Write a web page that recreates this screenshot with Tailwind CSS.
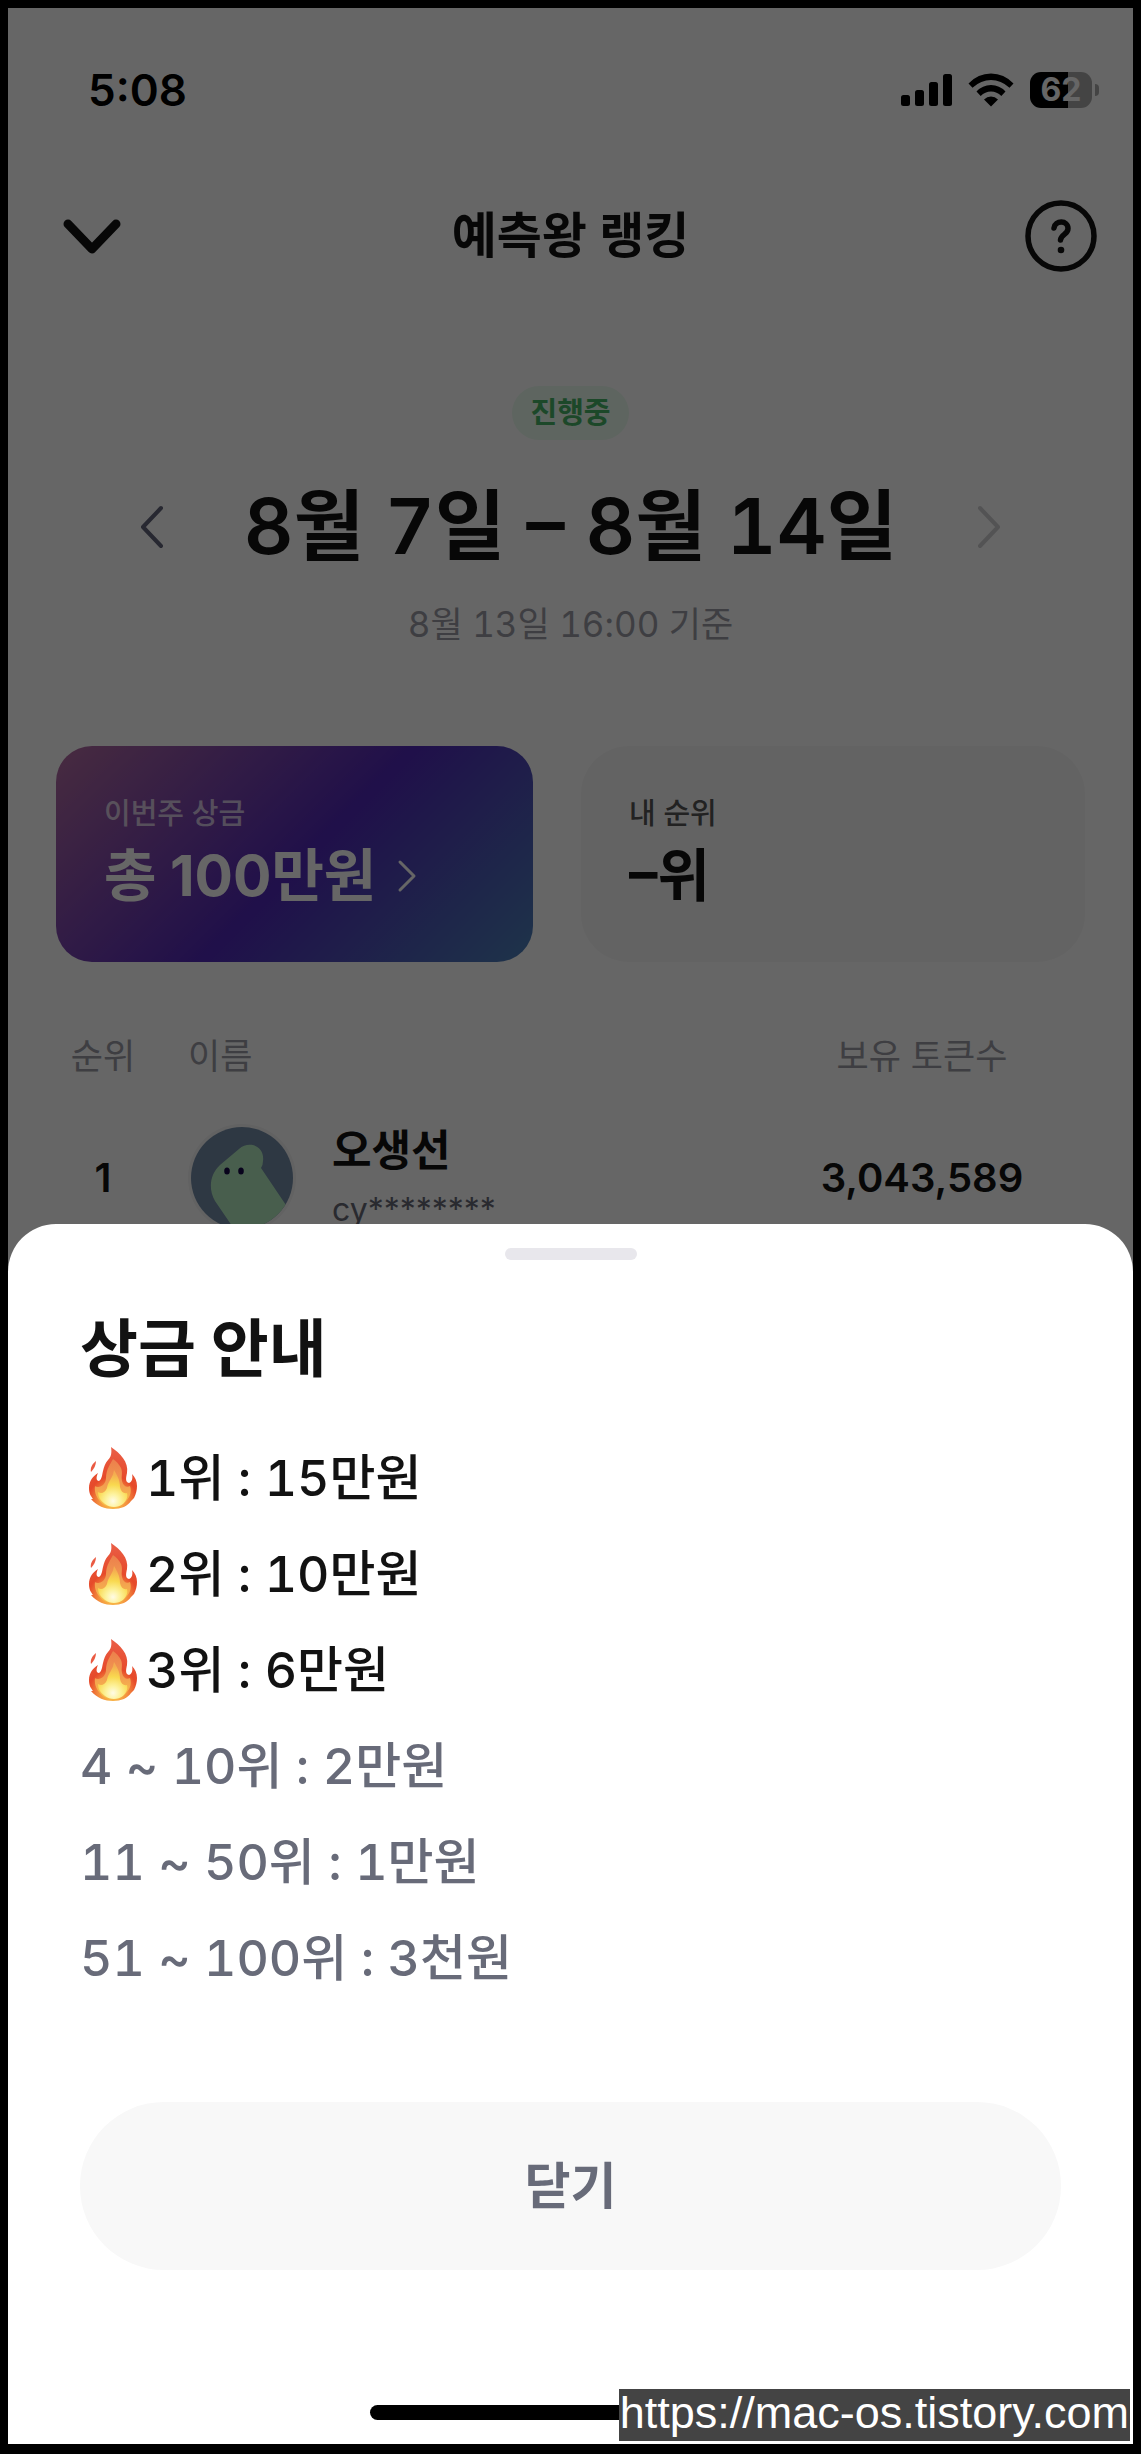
<!DOCTYPE html>
<html lang="ko">
<head>
<meta charset="utf-8">
<meta name="viewport" content="width=device-width, initial-scale=1">
<title>예측왕 랭킹</title>
<script src="https://cdn.jsdelivr.net/npm/@tailwindcss/browser@4"></script>
</head>
<body class="bg-black font-[family-name:Inter,'Noto_Sans_CJK_KR',sans-serif] text-[#121212]">
<!-- Shared flame symbol -->
<svg class="absolute size-0" aria-hidden="true">
  <defs>
    <radialGradient id="flame-outer" gradientUnits="userSpaceOnUse" cx="25" cy="54" r="54">
      <stop offset="0" stop-color="#fbd34c"/><stop offset=".25" stop-color="#f4933f"/><stop offset=".46" stop-color="#e64a2a"/><stop offset="1" stop-color="#ea5f48"/>
    </radialGradient>
    <linearGradient id="flame-mid" x1="0" y1="0" x2="0" y2="1">
      <stop offset="0" stop-color="#ec7f4c"/><stop offset=".5" stop-color="#f29a50"/><stop offset="1" stop-color="#f8c44a"/>
    </linearGradient>
    <radialGradient id="flame-core" gradientUnits="userSpaceOnUse" cx="25" cy="54" r="27">
      <stop offset="0" stop-color="#fffbe6"/><stop offset=".25" stop-color="#fdf3a0"/><stop offset=".6" stop-color="#f9d94f"/><stop offset="1" stop-color="#f4ac50"/>
    </radialGradient>
    <symbol id="flame" viewBox="0 0 50 62">
      <path fill="#ea5a42" d="M8 14C4 17 2 21 3 25C6 22 8 18 8 14Z"/>
      <path fill="url(#flame-outer)" d="M23 0C24 6 23 10 20 13C17 16 16 20 15 24C14 28 14 32 11 34C8 34 8 30 10 26C5 29 1 34 1 41C1 47 3 49 5 52H3C9 59 17 62 25 62C33 62 40 59 43 54L46 51C48 47 49 43 49 39C49 34 47 30 44 27C45 31 44 35 41 36C37 35 38 31 39 26C41 15 32 6 23 0Z"/>
      <path fill="url(#flame-mid)" d="M25 12C23 16 18 22 18 31C18 36 14 40 10 40C8 40 7 39 7 39C6 46 9 52 15 57C21 61 31 60 36 56C42 51 44 45 42 39C39 41 35 39 34 34C33 29 35 26 33 21C31 17 28 14 25 12Z"/>
      <path fill="url(#flame-core)" d="M26 23C25 31 20 34 19 41C17 46 13 47 10 45C10 50 12 53 17 57C22 61 30 61 35 57C39 53 40 49 39 46C36 47 33 45 32 40C32 33 29 28 26 23Z"/>
    </symbol>
  </defs>
</svg>

<div class="grid min-h-screen px-2 pt-2 pb-[10px]">
  <!-- Ranking page -->
  <main class="col-start-1 row-start-1 bg-white">
    <div class="flex h-[164px] items-center justify-between pr-[34px] pl-20 text-black">
      <time class="text-[44px] font-semibold">5:08</time>
      <div class="flex items-center gap-4">
        <svg class="h-8 w-[51px]" viewBox="0 0 51 32" aria-label="신호 세기"><rect y="21" width="9" height="11" rx="2.5"/><rect x="14" y="16" width="9" height="16" rx="2.5"/><rect x="28" y="8" width="9" height="24" rx="2.5"/><rect x="42" width="9" height="32" rx="2.5"/></svg>
        <svg class="h-[34px] w-[46px]" viewBox="0 0 46 34" aria-label="와이파이"><path d="M.5 10.500Q10 .5 23 .5T45.500 10.500L41.500 14.700Q33 7 23 7T4.500 14.700Z"/><path d="M8.500 18.500Q14.500 12 23 12T37.500 18.500L33.300 23Q29 18.500 23 18.500T12.700 23Z"/><path d="M16 26.500Q19 23.500 23 23.500T30 26.500L23 33.500Z"/></svg>
        <div class="flex items-center gap-[3px]">
          <div class="flex h-9 w-[62px] items-center justify-center rounded-[11px] bg-linear-to-r from-black from-61% to-[#aaa] to-61% text-[32px] leading-none font-bold text-white">62</div>
          <div class="h-3 w-1 rounded-r-full bg-[#aaa]"></div>
        </div>
      </div>
    </div>

    <header class="grid h-32 grid-cols-[1fr_auto_1fr] items-center px-9">
      <button type="button" class="ml-4 w-[62px]" aria-label="뒤로"><svg class="h-9 w-[62px]" viewBox="0 0 62 36" fill="none" stroke="currentColor" stroke-width="9" stroke-linecap="round" stroke-linejoin="round"><path d="M8 6L32 31L56 6"/></svg></button>
      <h1 class="text-[49px] leading-[72px] font-semibold">예측왕 랭킹</h1>
      <button type="button" class="justify-self-end" aria-label="도움말"><svg class="size-[72px]" viewBox="0 0 72 72" fill="none" stroke="currentColor" stroke-linecap="round"><circle cx="36" cy="36" r="33" stroke-width="5.500"/><path stroke-width="5.500" d="M29 28C30 20 43 20 43 28.500C43 34.500 36 34 35.500 40"/><circle cx="36" cy="50" r="3.300" fill="currentColor" stroke="none"/></svg></button>
    </header>

    <section class="flex flex-col items-center pt-[86px] tabular-nums">
      <span class="flex h-[54px] items-center rounded-full bg-[#ebfcf0] px-[18px] text-[29px] font-semibold text-[#46b466]">진행중</span>
      <div class="mt-[38px] flex w-full items-center justify-between px-[128px]">
        <button type="button" aria-label="이전 주"><svg class="h-12 w-8" viewBox="0 0 32 48" fill="none" stroke="#62647a" stroke-width="4" stroke-linecap="round" stroke-linejoin="round"><path d="M25 6L7 25L25 44"/></svg></button>
        <h2 class="text-[77px] leading-[96px] font-semibold [font-feature-settings:'case']">8월 7일 – 8월 14일</h2>
        <button type="button" aria-label="다음 주"><svg class="h-12 w-8" viewBox="0 0 32 48" fill="none" stroke="#d0d0d2" stroke-width="4" stroke-linecap="round" stroke-linejoin="round"><path d="M7 6L25 25L7 44"/></svg></button>
      </div>
      <p class="mt-[26px] text-[35px] leading-[48px] text-[#9b9ca5]">8월 13일 16:00 기준</p>
    </section>

    <section class="mt-[98px] grid grid-cols-[477fr_504fr] gap-12 px-12">
      <a href="#prize" class="h-[216px] rounded-[36px] bg-linear-[135deg] from-[#b46ca0] via-[#5028b8] via-52% to-[#4b82b9] px-12 pt-12 text-white">
        <p class="text-[29px] leading-10 font-medium text-white/70">이번주 상금</p>
        <p class="mt-[10px] flex items-center gap-5 text-[57px] leading-[64px] font-bold">총 100만원
          <svg class="h-9 w-6" viewBox="0 0 24 36" fill="none" stroke="currentColor" stroke-width="3" stroke-linecap="round" stroke-linejoin="round"><path d="M4 4L18 18L4 32"/></svg></p>
      </a>
      <div class="h-[216px] rounded-[48px] bg-[#f8f8f8] px-12 pt-12">
        <p class="text-[29px] leading-10 font-medium text-[#555]">내 순위</p>
        <p class="mt-[10px] text-[57px] leading-[64px] font-bold [font-feature-settings:'case']">–위</p>
      </div>
    </section>

    <div class="mt-[46px] px-12">
      <table class="w-full table-fixed">
        <thead class="text-[35px] text-[#9b9ca5]">
          <tr class="h-24"><th class="w-[94px] p-0 font-normal">순위</th><th class="p-0 pl-[38px] text-left font-normal">이름</th><th class="w-[326px] p-0 font-normal">보유 토큰수</th></tr>
        </thead>
        <tbody>
          <tr class="h-[148px] text-[40px] font-semibold">
            <td class="p-0 text-center">1</td>
            <td class="p-0 pl-[38px]">
              <div class="flex items-center gap-9">
                <svg class="size-[108px] shrink-0" viewBox="0 0 108 108" role="img" aria-label="프로필">
                  <defs><clipPath id="avatar"><circle cx="54" cy="54" r="51"/></clipPath></defs>
                  <circle cx="54" cy="54" r="54" fill="#f4f4f6"/>
                  <g clip-path="url(#avatar)"><path fill="#738ca7" d="M0 0H108V108H0Z"/>
                  <path fill="#b5ecc0" d="M51 25C61 16 77 22 75 37Q75 41 73 44L114 105L70 140L27 77C20 65 22 50 32 41Z"/></g>
                  <ellipse cx="39" cy="47" rx="2.800" ry="3.500" fill="#160846"/><ellipse cx="53" cy="47" rx="2.800" ry="3.500" fill="#160846"/>
                </svg>
                <div><p class="text-[43px] leading-[56px]">오생선</p><p class="mt-2 text-[32px] leading-[48px] font-normal text-[#686a77]">cy********</p></div>
              </div>
            </td>
            <td class="p-0 text-center">3,043,589</td>
          </tr>
        </tbody>
      </table>
    </div>
  </main>

  <!-- Dimmed backdrop with bottom sheet -->
  <div class="relative z-10 col-start-1 row-start-1 flex flex-col justify-end bg-black/60">
    <section id="prize" role="dialog" aria-labelledby="prize-title" class="flex flex-col rounded-t-[48px] bg-white px-[72px] pt-6 pb-6">
      <div class="h-3 w-[132px] self-center rounded-full bg-[#e8e7ec]"></div>
      <h2 id="prize-title" class="mt-12 text-[63px] leading-[80px] font-bold">상금 안내</h2>
      <ul class="mt-[42px] text-[50px] leading-[96px] font-medium tabular-nums">
        <li class="flex items-center gap-2 pl-2"><svg class="h-[62px] w-[50px]"><use href="#flame"/></svg>1위 : 15만원</li>
        <li class="flex items-center gap-2 pl-2"><svg class="h-[62px] w-[50px]"><use href="#flame"/></svg>2위 : 10만원</li>
        <li class="flex items-center gap-2 pl-2"><svg class="h-[62px] w-[50px]"><use href="#flame"/></svg>3위 : 6만원</li>
        <li class="text-[#686b79]">4 ~ 10위 : 2만원</li>
        <li class="text-[#686b79]">11 ~ 50위 : 1만원</li>
        <li class="text-[#686b79]">51 ~ 100위 : 3천원</li>
      </ul>
      <button type="button" class="mt-24 h-[168px] rounded-full bg-[#f8f8f8] text-[50px] font-semibold text-[#686b79]">닫기</button>
      <div class="mt-[135px] h-[15px] w-[402px] self-center rounded-full bg-black"></div>
    </section>
    <a href="https://mac-os.tistory.com" class="absolute right-[3px] bottom-[3px] flex h-[52px] items-center bg-[#444] px-px pb-[6px] font-[family-name:'Liberation_Sans',sans-serif] text-[45px] leading-none text-white">https://mac-os.tistory.com</a>
  </div>
</div>
</body>
</html>
